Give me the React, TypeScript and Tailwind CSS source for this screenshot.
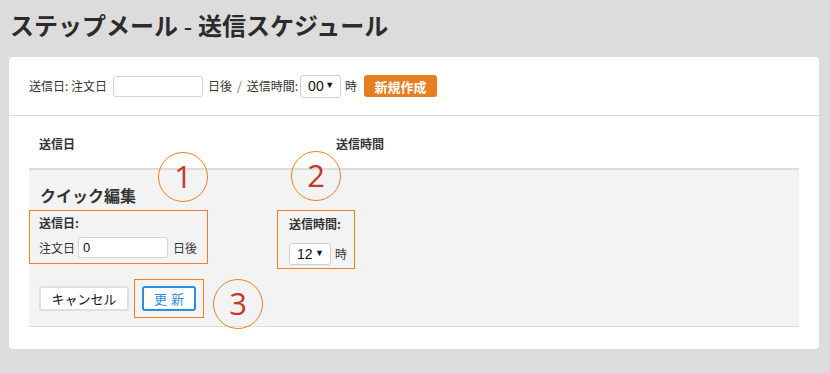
import React from 'react'

const sans = { fontFamily: '"Noto Sans CJK JP", "Liberation Sans", sans-serif' }

function Marker({ n, className }: { n: number; className: string }) {
    return (
        <div className={`absolute w-[50px] h-[50px] rounded-full border border-[#f57c1f] flex items-center justify-center ${className}`}>
            <span className="text-[31px] leading-none font-normal text-[#c4392a] font-['Open_Sans',sans-serif] mt-[-2px]">{n}</span>
        </div>
    )
}

function FakeSelect({ value, className }: { value: string; className: string }) {
    return (
        <div className={`flex items-center justify-between bg-white border border-[#cfcfcf] rounded-[3px] pl-[7px] pr-[6px] text-[14px] text-[#111] font-['Liberation_Sans',sans-serif] ${className}`}>
            <span>{value}</span>
            <span className="text-[9px]">▼</span>
        </div>
    )
}

export default function App() {
    return (
        <div className="relative w-[830px] h-[373px] bg-[#dcdcdc] overflow-hidden text-[12px] text-[#333]" style={sans}>
            <h1 className="pl-[10px] pt-[10px] h-[57px] text-[24px] leading-[34px] font-bold text-[#2b2b2b] font-['Liberation_Serif','Noto_Sans_CJK_JP',serif]">
                ステップメール - 送信スケジュール
            </h1>

            <div className="ml-[9px] w-[810px] bg-white rounded-[4px] pb-[22px]">
                {/* 新規作成 */}
                <div className="h-[59px] flex items-center px-[20px] border-b border-[#dcdcdc]">
                    <span>送信日: 注文日</span>
                    <div className="ml-[6px] w-[90px] h-[21px] border border-[#d4d4d4] rounded-[3px]" />
                    <span className="ml-[5px]">日後</span>
                    <span className="ml-[5px] text-[#777]">/</span>
                    <span className="ml-[5px]">送信時間:</span>
                    <FakeSelect value="00" className="ml-[2px] w-[41px] h-[23px]" />
                    <span className="ml-[4px]">時</span>
                    <button className="ml-[7px] w-[73px] h-[22px] rounded-[3px] bg-[#e67e22] text-white text-[13px] font-bold leading-none">
                        新規作成
                    </button>
                </div>

                {/* テーブル */}
                <div className="mx-[20px]">
                    <div className="flex h-[54px] items-end pb-[15px] border-b-2 border-[#dcdcdc] font-bold">
                        <span className="pl-[10px] w-[307px]">送信日</span>
                        <span>送信時間</span>
                    </div>

                    <div className="bg-[#f3f3f3] border-b border-[#dcdcdc] pt-[15px] pb-[8px]">
                        <div className="pl-[11px] h-[25px] text-[16px] leading-[24px] font-bold text-[#333] font-['Liberation_Serif','Noto_Sans_CJK_JP',serif]">
                            クイック編集
                        </div>
                        <div className="flex items-start">
                            <div className="w-[179px] h-[54px] border border-[#f57c1f] pl-[9px] pt-[3px]">
                                <div className="font-bold leading-[18px]">送信日:</div>
                                <div className="flex items-center mt-[5px]">
                                    <span>注文日</span>
                                    <div className="ml-[3px] w-[90px] h-[21px] bg-white border border-[#d4d4d4] rounded-[3px] pl-[4px] text-[13px] leading-[19px] text-[#111] font-['Liberation_Sans',sans-serif]">0</div>
                                    <span className="ml-[5px]">日後</span>
                                </div>
                            </div>
                            <div className="ml-[69px] w-[78px] h-[59px] border border-[#f57c1f] pl-[11px] pt-[4px]">
                                <div className="font-bold leading-[18px]">送信時間:</div>
                                <div className="flex items-center mt-[10px]">
                                    <FakeSelect value="12" className="w-[42px] h-[22px]" />
                                    <span className="ml-[4px]">時</span>
                                </div>
                            </div>
                        </div>
                        <div className="flex items-center mt-[10px] pl-[10px]">
                            <button className="w-[90px] h-[25px] bg-white border-2 border-[#dedede] rounded-[3px] text-[13px] text-[#111] leading-none">
                                キャンセル
                            </button>
                            <div className="ml-[5px] w-[70px] h-[39px] border border-[#f57c1f] flex items-center justify-center">
                                <button className="w-[54px] h-[25px] bg-white border-2 border-[#2b8fe0] rounded-[3px] text-[13px] text-[#2b8fe0] leading-none tracking-[4px] pl-[4px]">
                                    更新
                                </button>
                            </div>
                        </div>
                    </div>
                </div>
            </div>

            <Marker n={1} className="left-[158px] top-[152px]" />
            <Marker n={2} className="left-[291px] top-[151px]" />
            <Marker n={3} className="left-[213px] top-[279px]" />
        </div>
    )
}
